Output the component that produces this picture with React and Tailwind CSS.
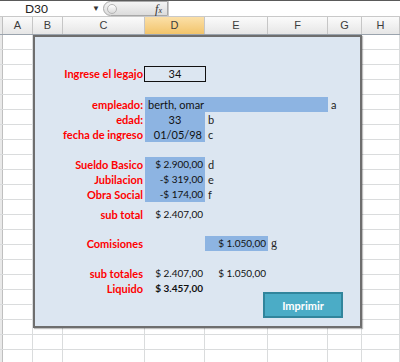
import React from 'react';

const cols = [
  { key: 'A', w: 'w-[30px]' },
  { key: 'B', w: 'w-[30px]' },
  { key: 'C', w: 'w-[82px]' },
  { key: 'D', w: 'w-[60px]', active: true },
  { key: 'E', w: 'w-[63px]' },
  { key: 'F', w: 'w-[60px]' },
  { key: 'G', w: 'w-[34px]' },
  { key: 'H', w: 'w-[38px]' },
];

const rows = Array.from({ length: 22 }, (_, i) => i);

function Label({ children }) {
  return (
    <div className="w-[110px] pr-[2px] text-right font-bold text-[#f00]">{children}</div>
  );
}

function Row({ label, children, className = 'h-[15px]' }) {
  return (
    <div className={`flex items-center leading-[15px] ${className}`}>
      <Label>{label}</Label>
      {children}
    </div>
  );
}

function Note({ children }) {
  return <span className="pl-[3px] text-[#222]">{children}</span>;
}

export default function App() {
  return (
    <div className="relative w-[400px] h-[362px] overflow-hidden bg-white font-['Lato',sans-serif] text-[11px] text-[#111]">
      {/* formula bar */}
      <div className="flex h-[17px] border-t border-[#5a5a5a] border-b border-b-[#c9c9c9] bg-white">
        <div className="relative w-[103px] flex items-center justify-center pr-[30px] text-[12px] text-[#222]">
          D30
          <span className="absolute right-[3px] top-[1px] text-[8px] text-[#333]">▼</span>
        </div>
        <div className="w-[65px] flex items-center rounded-l-full border border-[#a8a8a8] bg-gradient-to-b from-[#f4f4f4] to-[#dcdcdc]">
          <span className="ml-[3px] w-[10px] h-[10px] rounded-full border border-[#b5b5b5] bg-gradient-to-b from-white to-[#dadada]" />
          <span className="ml-auto mr-[5px] font-['Liberation_Serif',serif] italic text-[12px] text-[#333]">
            f<span className="text-[8px]">x</span>
          </span>
        </div>
        <div className="flex-1 border-l border-[#c9c9c9]" />
      </div>

      {/* column headers */}
      <div className="flex h-[18px] border-b border-[#9aa3ad]">
        <div className="w-[3px] bg-[#e9e9e9] border-r border-[#bfbfbf]" />
        {cols.map((c) => (
          <div
            key={c.key}
            className={`${c.w} shrink-0 flex items-center justify-center border-r border-[#c6c6c6] text-[11px] font-['Liberation_Sans',sans-serif] text-[#3c3c3c] ${
              c.active
                ? 'bg-gradient-to-b from-[#fbe0a8] to-[#f2c46a]'
                : 'bg-gradient-to-b from-[#fbfbfb] to-[#e6e6e6]'
            }`}
          >
            {c.key}
          </div>
        ))}
      </div>

      {/* grid */}
      <div className="flex flex-col">
        {rows.map((r) => (
          <div key={r} className="flex h-[15px] border-b border-[#dadcdd]">
            <div className="w-[3px] bg-[#e9e9e9] border-r border-[#bfbfbf]" />
            {cols.map((c) => (
              <div key={c.key} className={`${c.w} shrink-0 border-r border-[#dadcdd]`} />
            ))}
          </div>
        ))}
      </div>

      {/* form panel over the sheet */}
      <div className="absolute left-[33px] top-[35px] w-[329px] h-[293px] border-2 border-[#6e6e6e] bg-[#dce6f1] shadow-[1px_1px_1px_rgba(0,0,0,0.25)]">
        <div className="flex flex-col pt-[29px]">
          <div className="flex items-center h-[16px] leading-[14px]">
            <Label>Ingrese el legajo</Label>
            <div className="w-[62px] h-[16px] -ml-[1px] border border-[#111] text-center">34</div>
          </div>

          <div className="h-[15px]" />

          <Row label="empleado:">
            <div className="w-[183px] h-[15px] bg-[#8db4e2] pl-[3px]">berth, omar</div>
            <Note>a</Note>
          </Row>
          <Row label="edad:">
            <div className="w-[60px] h-[15px] bg-[#8db4e2] text-center">33</div>
            <Note>b</Note>
          </Row>
          <Row label="fecha de ingreso">
            <div className="w-[60px] h-[15px] bg-[#8db4e2] text-right pr-[3px]">01/05/98</div>
            <Note>c</Note>
          </Row>

          <div className="h-[15px]" />

          <Row label="Sueldo Basico">
            <div className="w-[60px] h-[15px] bg-[#8db4e2] text-right pr-[2px] text-[10px]">$ 2.900,00</div>
            <Note>d</Note>
          </Row>
          <Row label="Jubilacion">
            <div className="w-[60px] h-[15px] bg-[#8db4e2] text-right pr-[2px] text-[10px]">-$ 319,00</div>
            <Note>e</Note>
          </Row>
          <Row label="Obra Social">
            <div className="w-[60px] h-[15px] bg-[#8db4e2] text-right pr-[2px] text-[10px]">-$ 174,00</div>
            <Note>f</Note>
          </Row>

          <Row label="sub total" className="h-[16px] mt-[4px]">
            <div className="w-[60px] text-right pr-[2px] text-[10px]">$ 2.407,00</div>
          </Row>

          <div className="h-[14px]" />

          <Row label="Comisiones">
            <div className="w-[60px]" />
            <div className="w-[63px] h-[15px] bg-[#8db4e2] text-right pr-[2px] text-[10px]">$ 1.050,00</div>
            <span className="pl-[3px] font-['Liberation_Serif',serif] text-[12px] text-[#222]">g</span>
          </Row>

          <div className="h-[15px]" />

          <Row label="sub totales">
            <div className="w-[60px] text-right pr-[2px] text-[10px]">$ 2.407,00</div>
            <div className="w-[63px] text-right pr-[2px] text-[10px]">$ 1.050,00</div>
          </Row>
          <div className="flex items-start leading-[15px]">
            <Label>Liquido</Label>
            <div className="w-[60px] h-[15px] text-right pr-[2px] font-bold text-[10px]">$ 3.457,00</div>
            <button className="ml-[58px] mt-[11px] w-[80px] h-[26px] border-2 border-[#31859c] bg-[#4bacc6] text-white font-bold text-[11px]">
              Imprimir
            </button>
          </div>
        </div>
      </div>
    </div>
  );
}
